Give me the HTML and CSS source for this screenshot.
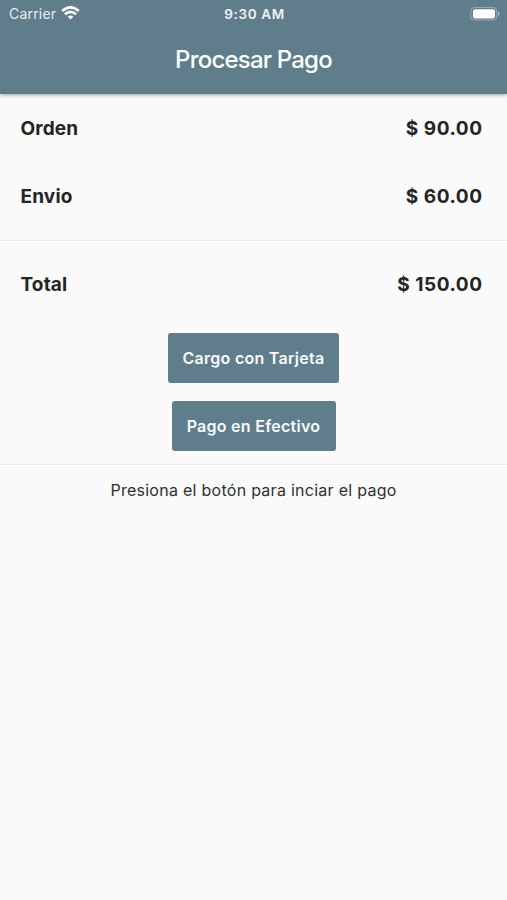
FILE: index.html
```html
<!DOCTYPE html>
<html lang="es">
<head>
<meta charset="utf-8">
<title>Procesar Pago</title>
<link rel="stylesheet" href="styles.css">
</head>
<body>
<header class="appbar">
  <div class="status">
    <div class="carrier"><span class="carrier-name">Carrier</span>
      <svg class="wifi" width="19" height="14" viewBox="0 0 19 14" fill="none" stroke="#fff" stroke-width="2.7"><path d="M1.2 5.1Q9.5-2.2 17.8 5.1M4 8.3Q9.5 3.6 15 8.3"/><path d="M9.5 13.6L6.6 10.6Q9.5 8.2 12.4 10.6Z" fill="#fff" stroke="none"/></svg>
    </div>
    <time class="clock">9:30 AM</time>
    <svg class="battery" width="30" height="14" viewBox="0 0 30 14"><rect x=".8" y=".5" width="26" height="12.5" rx="3.5" fill="none" stroke="#fff" stroke-opacity=".35"/><rect x="3" y="2.2" width="22" height="9.2" rx="1.8" fill="#fff"/><path d="M28 4.5Q31 6.7 28 9Z" fill="#fff" fill-opacity=".5"/></svg>
  </div>
  <h1 class="title">Procesar Pago</h1>
</header>
<main>
  <div class="row"><span class="label">Orden</span><span class="amount">$ 90.00</span></div>
  <div class="row"><span class="label">Envio</span><span class="amount">$ 60.00</span></div>
  <hr class="divider">
  <div class="row total"><span class="label">Total</span><span class="amount">$ 150.00</span></div>
  <div class="actions">
    <button class="btn card">Cargo con Tarjeta</button>
    <button class="btn cash">Pago en Efectivo</button>
  </div>
  <hr class="divider lower">
  <p class="hint">Presiona el botón para inciar el pago</p>
</main>
</body>
</html>
```
FILE: styles.css
```css
* { box-sizing: border-box; }
body { margin: 0; height: 900px; background: #fafafa; color: #242424; font-family: Inter, "Liberation Sans", sans-serif; }
.appbar { height: 94px; background: #607d8b; color: #fff; box-shadow: 0 1px 4px rgba(0,0,0,.35); }
.status { height: 27px; display: grid; grid-template-columns: 1fr auto 1fr; align-items: center; padding: 0 7px 0 9px; }
.carrier { display: flex; align-items: center; gap: 5px; font-size: 14px; letter-spacing: .2px; color: #e8eef1; }
.wifi { margin-top: -1px; }
.clock { font-size: 13.5px; font-weight: 600; letter-spacing: .65px; color: #f0f4f6; }
.battery { justify-self: end; }
.title { margin: 0; height: 67px; padding-bottom: 2px; display: flex; align-items: center; justify-content: center; font-size: 24px; font-weight: 500; letter-spacing: -.8px; }
.row { height: 68.5px; padding: 0 25px 0 20.5px; display: flex; align-items: center; justify-content: space-between; font-size: 19px; font-weight: 650; }
.label { letter-spacing: .15px; }
.amount { letter-spacing: .55px; margin-right: -.6px; }
.total { height: 87px; }
.divider { margin: 9px 0 0; border: 0; height: 1px; background: #ebebeb; }
.lower { margin-top: 13px; }
.actions { display: flex; flex-direction: column; align-items: center; gap: 18px; padding-top: 5px; }
.btn { height: 50px; border: 0; border-radius: 3px; padding: 0 0 1px; background: #607d8b; color: #f8fbfc; font: 600 16px Inter, "Liberation Sans", sans-serif; letter-spacing: .27px; }
.card { width: 171px; }
.cash { width: 164px; }
.hint { margin: 14px 0 0; text-align: center; font-size: 16px; line-height: 22px; letter-spacing: .27px; color: #303030; }
```
